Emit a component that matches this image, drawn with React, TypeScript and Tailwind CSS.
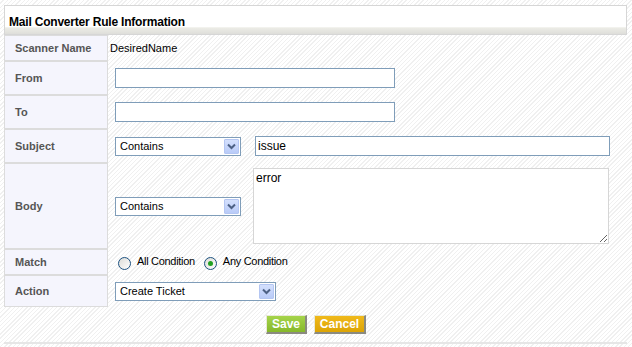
import React from "react";

const font = { fontFamily: '"Liberation Sans", Arial, sans-serif' };

function Label({ text, h }: { text: string; h: string }) {
  return (
    <div
      className={`w-[104px] shrink-0 ${h} flex items-center pl-[10px] border border-[#dcdcdc] bg-[#f5f5fd] text-[11px] font-bold text-[#555555]`}
    >
      {text}
    </div>
  );
}

function FakeSelect({ value, w }: { value: string; w: string }) {
  return (
    <div
      className={`${w} h-[19px] flex items-center justify-between border border-[#7f9db9] bg-white pl-[4px] pr-[1px] text-[11px] text-black`}
    >
      <span>{value}</span>
      <span className="w-[15px] h-[15px] flex items-center justify-center rounded-[1px] border border-[#b4c6f2] bg-gradient-to-b from-[#d4e0fd] to-[#b9cbf8]">
        <svg width="9" height="7" viewBox="0 0 9 7">
          <path d="M1 1.5 L4.5 5 L8 1.5" fill="none" stroke="#4d6185" strokeWidth="2" />
        </svg>
      </span>
    </div>
  );
}

function Radio({ checked }: { checked?: boolean }) {
  return (
    <span className="w-[13px] h-[13px] rounded-full border border-[#1c5180] bg-gradient-to-br from-[#dcdcd7] to-white flex items-center justify-center">
      {checked && <span className="w-[5px] h-[5px] rounded-full bg-[#21a121]" />}
    </span>
  );
}

export default function App() {
  return (
    <div
      style={font}
      className="w-[632px] h-[347px] overflow-hidden bg-[repeating-linear-gradient(135deg,#ffffff_0px,#ffffff_2px,#f0f0f0_2px,#f0f0f0_3px)] px-[4px] pt-[5px] pr-[5px]"
    >
      <div className="h-[30px] border border-[#d6d6d6] bg-[linear-gradient(to_bottom,#ffffff_0%,#ffffff_74%,#ececE6_78%,#dededa_100%)] flex items-start pt-[7px] pl-[4px]">
        <span className="text-[12px] font-bold text-black tracking-[-0.2px]">Mail Converter Rule Information</span>
      </div>

      <div className="flex flex-col">
        <div className="flex items-center">
          <Label text="Scanner Name" h="h-[26px]" />
          <span className="pl-[2px] text-[11px] text-black">DesiredName</span>
        </div>
        <div className="flex items-center">
          <Label text="From" h="h-[34px]" />
          <input className="ml-[7px] w-[280px] h-[20px] border border-[#7f9db9] bg-white outline-none text-[11px] px-[2px]" />
        </div>
        <div className="flex items-center">
          <Label text="To" h="h-[34px]" />
          <input className="ml-[7px] w-[280px] h-[20px] border border-[#7f9db9] bg-white outline-none text-[11px] px-[2px]" />
        </div>
        <div className="flex items-center">
          <Label text="Subject" h="h-[34px]" />
          <div className="ml-[7px]">
            <FakeSelect value="Contains" w="w-[126px]" />
          </div>
          <input
            defaultValue="issue"
            className="ml-[14px] w-[355px] h-[20px] border border-[#7f9db9] bg-white outline-none text-[12px] text-black px-[2px]"
          />
        </div>
        <div className="flex items-center">
          <Label text="Body" h="h-[86px]" />
          <div className="ml-[7px] mt-[1px]">
            <FakeSelect value="Contains" w="w-[126px]" />
          </div>
          <textarea
            defaultValue="error"
            className="ml-[12px] w-[356px] h-[76px] border border-[#d6d6d6] bg-white outline-none text-[12px] text-black px-[2px] py-[2px] resize-y leading-[14px]"
          />
        </div>
        <div className="flex items-center">
          <Label text="Match" h="h-[26px]" />
          <div className="ml-[10px] mt-[2px] flex items-center text-[11px] text-black tracking-[-0.3px]">
            <Radio />
            <span className="ml-[6px] -mt-[3px]">All Condition</span>
            <span className="ml-[9px]">
              <Radio checked />
            </span>
            <span className="ml-[6px] -mt-[3px]">Any Condition</span>
          </div>
        </div>
        <div className="flex items-center">
          <Label text="Action" h="h-[32px]" />
          <div className="ml-[7px]">
            <FakeSelect value="Create Ticket" w="w-[161px]" />
          </div>
        </div>
      </div>

      <div className="flex justify-center gap-[7px] pt-[8px] pl-[1px]">
        <button className="w-[41px] h-[19px] border-t border-l border-t-[#e8e8d8] border-l-[#e8e8d8] border-b-2 border-r-2 border-b-[#8a8a80] border-r-[#8a8a80] bg-gradient-to-b from-[#a5d44a] to-[#86b82a] text-white text-[12px] font-bold leading-none">
          Save
        </button>
        <button className="w-[52px] h-[19px] border-t border-l border-t-[#e8e8d8] border-l-[#e8e8d8] border-b-2 border-r-2 border-b-[#8a8a80] border-r-[#8a8a80] bg-gradient-to-b from-[#f0b91a] to-[#dca404] text-white text-[12px] font-bold leading-none">
          Cancel
        </button>
      </div>

      <div className="mt-[8px] h-[2px] bg-[#e6e6e6]" />
    </div>
  );
}
